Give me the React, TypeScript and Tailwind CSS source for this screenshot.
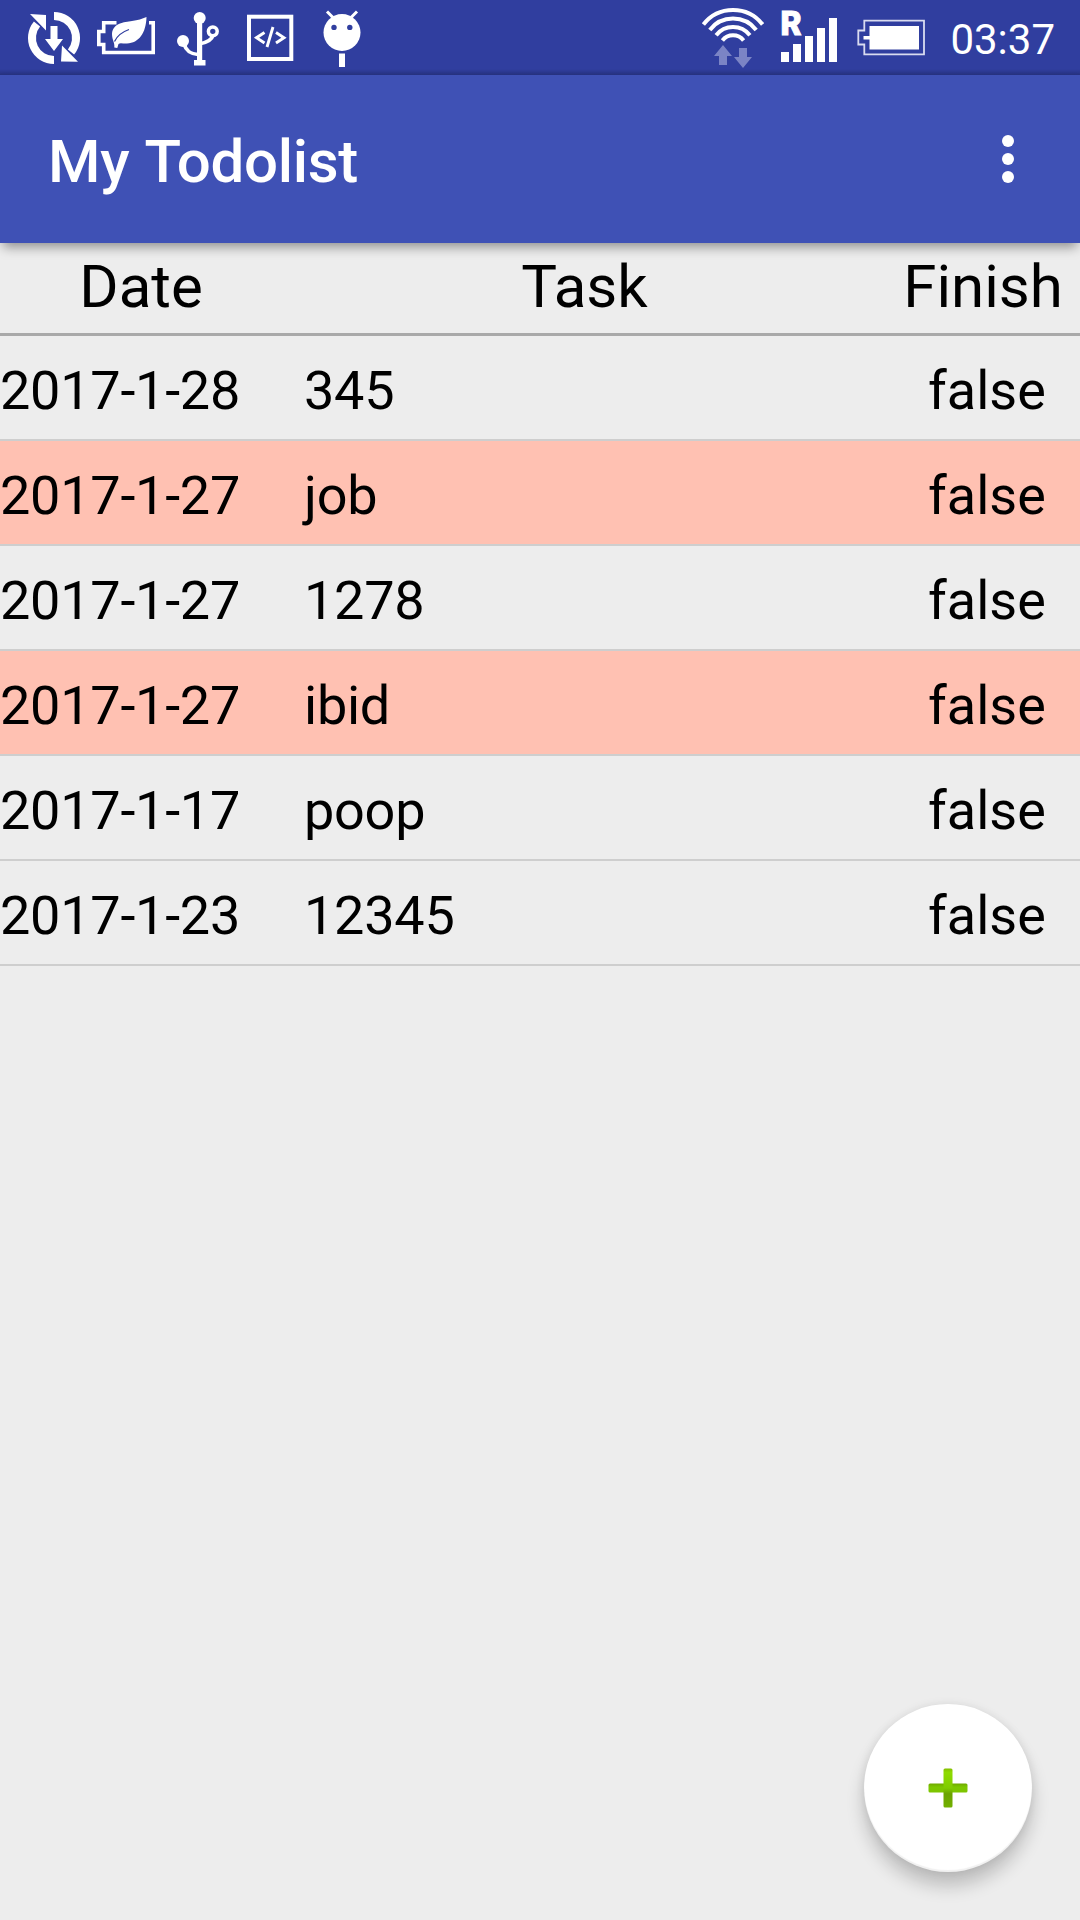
const tasks = [
  { date: '2017-1-28', task: '345', finish: 'false', due: false },
  { date: '2017-1-27', task: 'job', finish: 'false', due: true },
  { date: '2017-1-27', task: '1278', finish: 'false', due: false },
  { date: '2017-1-27', task: 'ibid', finish: 'false', due: true },
  { date: '2017-1-17', task: 'poop', finish: 'false', due: false },
  { date: '2017-1-23', task: '12345', finish: 'false', due: false },
];

function StatusBar() {
  return (
    <div className="flex h-[75px] justify-between bg-[#303e9f] bg-linear-to-b from-transparent from-92% to-black/20 pr-[25px] pl-6 text-white">
      <div className="flex">
        <svg className="mr-2 h-[75px] w-[60px]" viewBox="24 0 60 75" fill="currentColor">
          <path d="M54 16A22 22 0 0 1 71 52M54 60A22 22 0 0 1 37 24" fill="none" stroke="currentColor" strokeWidth="8" />
          <path d="M62 45.500L78 61.800L61 61.500ZM46 30.500V15L30 14Z" />
          <path d="M50.500 26H57.500V39H63L54 51L45 39H50.500Z" />
        </svg>
        <svg className="mr-[10px] h-[75px] w-[68px]" viewBox="92 0 68 75" fill="currentColor">
          <path d="M116.500 22.700H103.700V31.500H98.800V44.500H103.700V52.500H153.200V22.700H149" fill="none" stroke="currentColor" strokeWidth="3.600" />
          <path d="M146.500 17C146 33 139 43 127 43.500C123 43.700 120 42.500 118.500 44L117.300 48L114.300 47.500C115 43 112 40 112 34C113 23 124 22 132 21C138 20 142 19 146.500 17Z" />
          <path d="M114.500 41.500C117 36 122 32 129 29.500" fill="none" stroke="#303e9f" strokeWidth="1.300" />
        </svg>
        <svg className="mr-[14px] h-[75px] w-[56px]" viewBox="170 0 56 75" fill="currentColor">
          <circle cx="199.700" cy="18" r="6" />
          <circle cx="183" cy="41" r="6" />
          <path d="M197 18H202.200V60H205.500V65.500H194V60H197Z" />
          <path d="M184 44C186 51 190 54 199 54.500M199 44C208 42.500 212 40 213 35" fill="none" stroke="currentColor" strokeWidth="3.800" />
          <circle cx="212.800" cy="31.300" r="4.400" fill="#303e9f" stroke="currentColor" strokeWidth="3.500" />
        </svg>
        <svg className="mr-[18px] h-[75px] w-[60px]" viewBox="240 0 60 75" fill="none" stroke="currentColor">
          <rect x="249" y="16.700" width="42.300" height="42.300" strokeWidth="4" />
          <path d="M264.500 32.500L256.500 37.700L264.500 43M276 32.500L284 37.700L276 43M273 27L267 47" strokeWidth="2.900" />
        </svg>
        <svg className="h-[75px] w-[48px]" viewBox="318 0 48 75" fill="currentColor">
          <circle cx="342" cy="32.500" r="18.500" />
          <path d="M327 11.500L334 18.500M357 11.500L350 18.500" stroke="currentColor" strokeWidth="3" />
          <circle cx="334" cy="27.400" r="2.700" fill="#303e9f" />
          <circle cx="349.800" cy="27.400" r="2.700" fill="#303e9f" />
          <rect x="339" y="53.500" width="6" height="13.500" />
        </svg>
      </div>
      <div className="flex">
        <svg className="mr-2 h-[75px] w-[70px]" viewBox="698 0 70 75">
          <path
            d="M703.400 24.400A37.500 37.500 0 0 1 762.600 24.400M709.800 29.900A29.500 29.500 0 0 1 756.200 29.900M716.100 35.300A21.500 21.500 0 0 1 749.900 35.300M722.400 40.500A13.500 13.500 0 0 1 743.600 40.500"
            fill="none"
            stroke="currentColor"
            strokeWidth="4"
          />
          <path d="M723 45L732 56H727V65H719V56H714ZM739 48H747V57H752L743 68L734 57H739Z" fill="#7b84c5" />
        </svg>
        <svg className="mr-[10px] h-[75px] w-[66px]" viewBox="776 0 66 75" fill="currentColor">
          <text x="780.500" y="34.500" fontSize="32.500" fontWeight="900" fontFamily="Roboto, sans-serif" stroke="currentColor" strokeWidth="1">R</text>
          <path d="M781 52H789V62H781ZM793 44H801V62H793ZM805 36H813V62H805ZM817 28H825V62H817ZM829 18H837V62H829Z" />
        </svg>
        <svg className="mr-5 h-[75px] w-[78px]" viewBox="852 0 78 75">
          <path d="M864.300 20.700H924V54.300H864.300V44.500H858.300V30.500H864.300Z" fill="none" stroke="#d9dcf0" strokeWidth="1.800" />
          <path d="M869.500 26H919V49.500H869.500V39.500H863.500V36H869.500Z" fill="currentColor" />
        </svg>
        <span className="pt-1 text-[42px] leading-[71px]">03:37</span>
      </div>
    </div>
  );
}

export default function App() {
  return (
    <div className="relative flex h-[1920px] w-[1080px] flex-col overflow-hidden bg-[#ededed] font-[Roboto,sans-serif] text-black">
      <StatusBar />
      <header className="z-10 flex h-[168px] items-center justify-between bg-[#3f51b5] pr-[66px] pl-12 text-white shadow-[0_7px_11px_-3px_rgba(0,0,0,0.4)]">
        <h1 className="pt-[5px] text-[60px] leading-[70px] font-medium tracking-[-0.3px] [word-spacing:2px]">My Todolist</h1>
        <button className="flex flex-col gap-[6px]" aria-label="More options">
          <span className="size-3 rounded-full bg-white" />
          <span className="size-3 rounded-full bg-white" />
          <span className="size-3 rounded-full bg-white" />
        </button>
      </header>
      <div className="flex h-[93px] border-b-[3px] border-[#a9a9a9] text-center text-[60px] leading-[87px]">
        <div className="w-[282px]">Date</div>
        <div className="w-[605px]">Task</div>
        <div className="w-[192px]">Finish</div>
      </div>
      {tasks.map((t, i) => (
        <div
          key={i}
          className={`flex h-[105px] border-b-2 border-[#cecece] pt-[6px] text-[54px] leading-[97px] ${t.due ? 'bg-[#ffc1b2]' : ''}`}
        >
          <div className="w-[304px] tracking-[-0.25px]">{t.date}</div>
          <div className="w-[590px] tracking-[-0.25px]">{t.task}</div>
          <div className="w-[186px] text-center">{t.finish}</div>
        </div>
      ))}
      <button
        aria-label="Add task"
        className="absolute right-12 bottom-12 flex size-[168px] items-center justify-center rounded-full bg-white shadow-[0_14px_18px_rgba(0,0,0,0.2),0_0_10px_rgba(0,0,0,0.08),inset_0_-2px_1px_rgba(0,0,0,0.06)]"
      >
        <svg className="size-10" viewBox="0 0 40 40">
          <defs>
            <linearGradient id="plus" x1="0" y1="0" x2="0" y2="1">
              <stop offset="0" stopColor="#84bd00" />
              <stop offset="0.100" stopColor="#8fdb00" />
              <stop offset="0.500" stopColor="#80cc00" />
              <stop offset="0.650" stopColor="#6ba300" />
              <stop offset="1" stopColor="#72b000" />
            </linearGradient>
            <linearGradient id="bar" x1="0" y1="0" x2="0" y2="1">
              <stop offset="0" stopColor="#6fa800" />
              <stop offset="0.400" stopColor="#7dc800" />
              <stop offset="1" stopColor="#7dc400" />
            </linearGradient>
          </defs>
          <rect x="0.500" y="15.500" width="39" height="9" rx="1.500" fill="url(#bar)" />
          <rect x="15.500" y="0.500" width="9" height="39" rx="1.500" fill="url(#plus)" />
        </svg>
      </button>
    </div>
  );
}
